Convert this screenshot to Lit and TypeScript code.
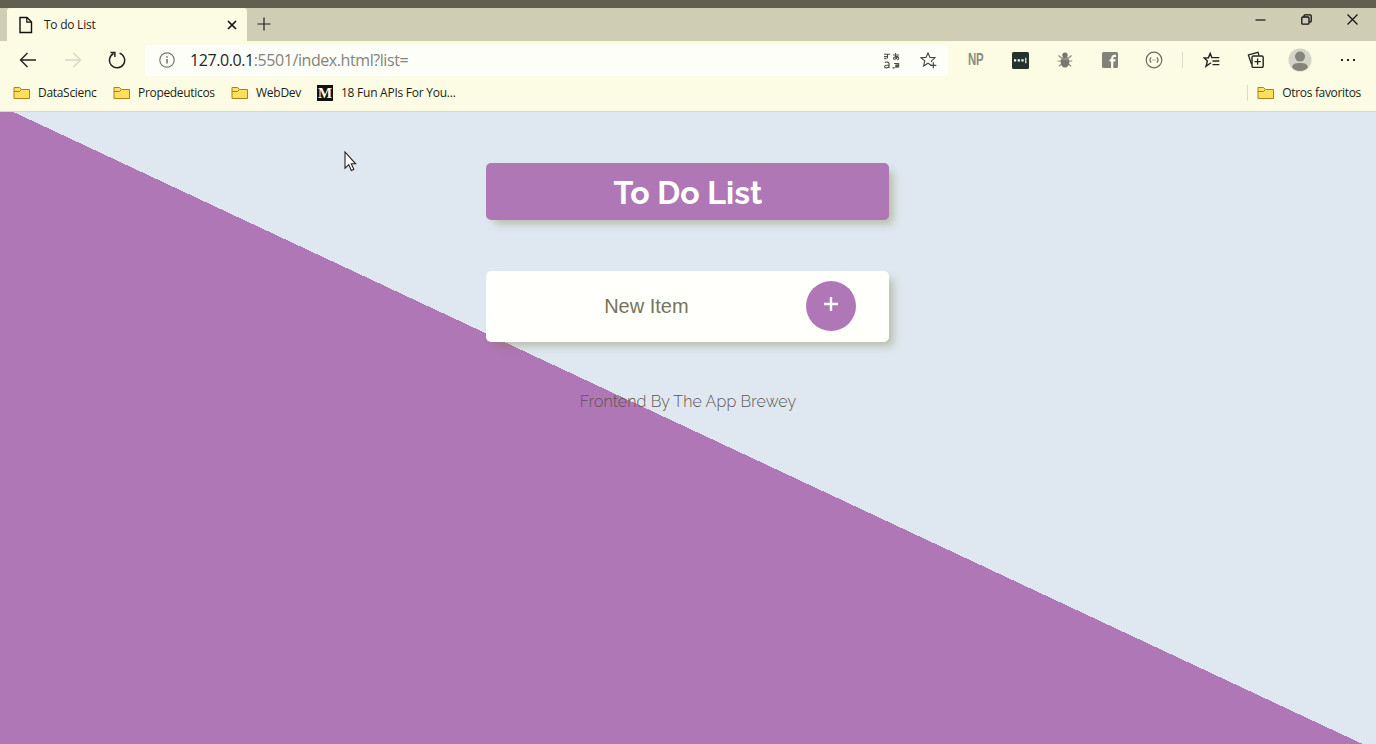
import { LitElement, html, css, svg } from "lit";
import { customElement } from "lit/decorators.js";

const icon = (w: number, h: number, body: unknown) =>
  html`<svg width=${w} height=${h} viewBox="0 0 ${w} ${h}" fill="none">${body}</svg>`;

const folder = () => icon(18, 14, svg`
  <path d="M1 12.5V1.5h5.6l1.8 2h8.1v9z" fill="#ffdf60" stroke="#a88416"/>
  <path d="M1 5.5h5.6l1.8-2" stroke="#a88416"/>`);

const icons = {
  page: () => icon(16, 18, svg`<path d="M2 1.5h7l4.5 4.5v10.5H2z" stroke="#111" stroke-width="1.4"/><path d="M8.8 1.5V6.2h4.7" stroke="#111" stroke-width="1.2"/>`),
  close: () => icon(10, 10, svg`<path d="M1 1l8 8M9 1L1 9" stroke="#111" stroke-width="1.7"/>`),
  plus: () => icon(14, 14, svg`<path d="M7 .5v13M.5 7h13" stroke="#222" stroke-width="1.2"/>`),
  back: () => icon(18, 16, svg`<path d="M17 8H2M8.5 1L1.5 8l7 7" stroke="#222" stroke-width="1.4"/>`),
  forward: () => icon(18, 16, svg`<path d="M1 8h15M9.5 1l7 7-7 7" stroke="#d6d6ca" stroke-width="1.4"/>`),
  reload: () => icon(18, 18, svg`<path d="M5.6 2.5A7.6 7.6 0 1 0 11.6 2.1" stroke="#222" stroke-width="1.5"/><path d="M2.4 1.4h4.5v4.7" stroke="#222" stroke-width="1.5"/>`),
  info: () => icon(16, 16, svg`<circle cx="8" cy="8" r="7.2" stroke="#76766c" stroke-width="1.2"/><path d="M8 7v4.5M8 4.2v1.5" stroke="#66665c" stroke-width="1.4"/>`),
  translate: () => icon(17, 17, svg`
    <path d="M1 2.2h6M1 4.6h3.5M4.5 2.2v4.3M1.2 6.6h2.2M10 3h6M12.6 1c-.3 2.8-.1 4.6.8 6.3M15 4c-.8 2.4-2.6 3.7-4.2 3.1-1.2-1.8 2.2-3 4-2.1 1.6.8 1 2.4-.6 3" stroke="#51514a" stroke-width="1.1"/>
    <path d="M1.8 10.6c1.4-1 4.2-.8 4.2 1.2V16M6 13c-2.4 0-4.4.3-4.4 1.7 0 1.6 3.2 1.5 4.4-.2M9.5 15.8h2.3M11 11.5h4.6V15H12" stroke="#51514a" stroke-width="1.2"/>
    <path d="M12.4 12.4h2.6v3h-2.6z" fill="#51514a"/>`),
  starAdd: () => icon(17, 17, svg`<path d="M11.3 13.2L8 11.2 3.6 14l1.2-5.1L1 5.8l5-.4L8 1l2 4.4 5 .4-3.6 3.1.3 1.3" stroke="#444" stroke-width="1.1"/><path d="M13.3 10.3v6M10.3 13.3h6" stroke="#444" stroke-width="1.2"/>`),
  dots: () => icon(17, 17, svg`<rect width="17" height="17" rx="1.5" fill="#25332c"/><path d="M2 8.4h2.2M5.7 8.4h2.2M9.4 8.4h2.2" stroke="#fff" stroke-width="2.2"/><path d="M13.8 5.7v5.5" stroke="#fff" stroke-width="1.1"/>`),
  bug: () => icon(16, 16, svg`<path d="M1.5 3.5l3.5 3M14.5 3.5l-3.5 3M.8 9h14.4M1.8 14.2l3.6-2.8M14.2 14.2l-3.6-2.8" stroke="#8a8a80" stroke-width="1.2"/><circle cx="8" cy="3.2" r="2.7" fill="#77776e"/><ellipse cx="8" cy="10" rx="4.4" ry="5.6" fill="#77776e"/><path d="M4 7h8" stroke="#aaa99e"/>`),
  facebook: () => icon(16, 16, svg`<rect width="16" height="16" rx="1.5" fill="#82827a"/><path d="M10.2 16V7c0-2.2.8-3.2 2.6-3.2H14M7.6 8.3h5.8" stroke="#fffff2" stroke-width="2.2"/>`),
  code: () => icon(18, 18, svg`<circle cx="9" cy="9" r="7.8" stroke="#6c6c64" stroke-width="1.2"/><path d="M6.2 6.4c-1.7 1.6-1.7 3.6 0 5.2M11.8 6.4c1.7 1.6 1.7 3.6 0 5.2" stroke="#66665f" stroke-width="1.2"/><path d="M7.6 9h.9M9.6 9h.9" stroke="#66665f" stroke-width="1.2"/>`),
  favorites: () => icon(17, 17, svg`<path d="M8 10.8L3 14.3l1.4-5.3L1.2 6l4.2-.2L7.2 1.4l1.6 4.2h7.5M9.5 9h6.8M9.5 12.6h6.8" stroke="#222" stroke-width="1.4"/>`),
  collections: () => icon(18, 18, svg`<path d="M4.4 13L1.4 3.9 11 1.4l1 3" stroke="#222" stroke-width="1.3"/><rect x="5" y="5" width="11.2" height="11.4" rx="1.5" stroke="#222" stroke-width="1.4"/><path d="M10.6 7.6v6.2M7.5 10.7h6.2" stroke="#222" stroke-width="1.3"/>`),
  profile: () => icon(24, 24, svg`<circle cx="12" cy="12" r="11.5" fill="#d4d4c8"/><circle cx="12" cy="8.6" r="5" fill="#85857a"/><path d="M4.2 19.5c0-3.2 2.6-4.6 7.8-4.6s7.8 1.4 7.8 4.6c-1.6 2.2-4.4 3.5-7.8 3.5s-6.2-1.3-7.8-3.5z" fill="#85857a"/>`),
  more: () => icon(16, 4, svg`<path d="M1 2h2M7 2h2M13 2h2" stroke="#222" stroke-width="2"/>`),
  minimize: () => icon(11, 11, svg`<path d="M.5 6h10" stroke="#111" stroke-width="1.2"/>`),
  restore: () => icon(11, 11, svg`<rect x=".8" y="3" width="7.2" height="7.2" rx="1" stroke="#111" stroke-width="1.3"/><path d="M3 2.8V1.8Q3 .8 4 .8h5.2q1 0 1 1V7q0 1-1 1H8.3" stroke="#111" stroke-width="1.3"/>`),
  exit: () => icon(11, 11, svg`<path d="M.5.5l10 10M10.5.5l-10 10" stroke="#111" stroke-width="1.2"/>`),
  cursor: () => icon(14, 21, svg`<path d="M1 1v16.2l3.8-3.6 2.5 5.9 2.5-1.1-2.5-5.6h4.3z" fill="#fff" stroke="#222" stroke-width="1.1"/>`),
};

@customElement("browser-chrome")
class BrowserChrome extends LitElement {
  static styles = css`
    :host { display: block; height: 112px; color: #1c1c18; font: 12px/16px "Open Sans", "Noto Sans", sans-serif; }
    svg { display: block; flex: none; }
    .edge { height: 8px; background: #605f50; }
    .tabs { height: 33px; display: flex; background: #cfceb4; padding-left: 7px; box-sizing: border-box; }
    .tab { width: 240px; box-sizing: border-box; background: #fcfce4; border-radius: 3px 3px 0 0; display: flex; align-items: center; padding: 0 10px 0 11px; }
    .tab-name { margin-left: 10px; flex: 1; letter-spacing: -0.25px; }
    .add { display: flex; align-items: center; padding: 0 0 1px 10px; }
    .window { margin-left: auto; display: flex; height: 23px; align-items: center; margin-right: 18px; gap: 35px; }
    .toolbar { height: 38px; background: #fcfce4; display: flex; align-items: center; padding-left: 6px; box-sizing: border-box; }
    .cell { width: 44.5px; flex: none; display: flex; justify-content: center; align-items: center; }
    .last { width: 50px; }
    .address { width: 803px; height: 31px; margin: 0 6px 0 5.5px; flex: none; box-sizing: border-box; background: #fefef9; border-radius: 3px; display: flex; align-items: center; padding: 0 11px 0 14px; }
    .url { flex: 1; margin-left: 15px; font-size: 16px; line-height: 22px; color: #84847b; letter-spacing: -0.42px; }
    .host { color: #24241e; }
    .translate { margin-right: 20px; }
    .np { font: bold 17px/20px "Liberation Sans", sans-serif; color: #8c8c82; transform: scaleX(0.67); }
    .split { width: 12.5px; display: flex; justify-content: center; flex: none; }
    .line { width: 1px; height: 16px; background: #dcdccc; }
    .bookmarks { height: 33px; box-sizing: border-box; background: #fcfce4; border-bottom: 1px solid #d7d7d3; display: flex; align-items: center; padding: 0 15px 4px 13px; }
    .bookmark { display: flex; align-items: center; gap: 7px; white-space: nowrap; }
    .b1 { width: 100px; letter-spacing: -0.3px; }
    .b2 { width: 118px; letter-spacing: -0.32px; }
    .b3 { width: 86px; letter-spacing: -0.25px; }
    .b4 { letter-spacing: -0.25px; gap: 8px; }
    .other { margin-left: auto; gap: 7px; letter-spacing: -0.33px; }
    .other .line { margin-right: 2px; }
    .medium { width: 16px; height: 16px; background: #111; color: #fff; font: bold 15px/16px "Liberation Serif", serif; text-align: center; letter-spacing: 0; }
  `;
  render() {
    return html`
      <div class="edge"></div>
      <div class="tabs">
        <div class="tab">${icons.page()}<span class="tab-name">To do List</span>${icons.close()}</div>
        <div class="add">${icons.plus()}</div>
        <div class="window">${icons.minimize()}${icons.restore()}${icons.exit()}</div>
      </div>
      <div class="toolbar">
        ${[icons.back, icons.forward, icons.reload].map((i) => html`<div class="cell">${i()}</div>`)}
        <div class="address">
          ${icons.info()}
          <span class="url"><span class="host">127.0.0.1</span>:5501/index.html?list=</span>
          <div class="translate">${icons.translate()}</div>
          ${icons.starAdd()}
        </div>
        <div class="cell"><span class="np">NP</span></div>
        ${[icons.dots, icons.bug, icons.facebook, icons.code].map((i) => html`<div class="cell">${i()}</div>`)}
        <div class="split"><div class="line"></div></div>
        ${[icons.favorites, icons.collections, icons.profile].map((i) => html`<div class="cell">${i()}</div>`)}
        <div class="cell last">${icons.more()}</div>
      </div>
      <div class="bookmarks">
        <div class="bookmark b1">${folder()}<span>DataScienc</span></div>
        <div class="bookmark b2">${folder()}<span>Propedeuticos</span></div>
        <div class="bookmark b3">${folder()}<span>WebDev</span></div>
        <div class="bookmark b4"><span class="medium">M</span><span>18 Fun APIs For You...</span></div>
        <div class="bookmark other"><span class="line"></span>${folder()}<span>Otros favoritos</span></div>
      </div>`;
  }
}

@customElement("todo-page")
class TodoPage extends LitElement {
  static styles = css`
    :host { display: block; height: 632px; box-sizing: border-box; padding-top: 51px; background: linear-gradient(25.1deg, #b077b6 50%, #dfe8f0 50%); font-family: Raleway, Lato, sans-serif; }
    .box { width: 403px; margin: 0 auto 0 486.4px; border-radius: 5px; box-sizing: border-box; background: #fffffb; box-shadow: 6px 6px 9px -2px rgba(120, 115, 60, 0.38); }
    .title { height: 57px; background: #b077b6; margin-bottom: 50.5px; }
    h1 { margin: 0; padding-top: 1px; color: #fff; font-size: 32px; line-height: 57px; font-weight: 700; text-align: center; }
    .new { height: 71px; display: flex; align-items: center; }
    .field { width: 320px; text-align: center; font: 20px/24px "Liberation Sans", sans-serif; color: #75755a; }
    .add { width: 50px; height: 50px; border-radius: 50%; background: #b077b6; border: 0; padding: 0 0 5px; display: flex; align-items: center; justify-content: center; }
    .credit { margin: 50px 0 0; text-align: center; font-size: 16px; line-height: 20px; font-weight: 300; letter-spacing: 0.1px; color: #5d554c; }
  `;
  render() {
    return html`
      <div class="box title"><h1>To Do List</h1></div>
      <div class="box new">
        <div class="field">New Item</div>
        <button class="add">${icon(16, 16, svg`<path d="M8 1v14M1 8h14" stroke="#fff" stroke-width="2.4"/>`)}</button>
      </div>
      <p class="credit">Frontend By The App Brewey</p>`;
  }
}

@customElement("app-root")
class AppRoot extends LitElement {
  static styles = css`
    :host { display: block; position: relative; width: 1376px; height: 744px; overflow: hidden; }
    .cursor { position: absolute; left: 344px; top: 151px; }
  `;
  render() {
    return html`<browser-chrome></browser-chrome><todo-page></todo-page><div class="cursor">${icons.cursor()}</div>`;
  }
}
